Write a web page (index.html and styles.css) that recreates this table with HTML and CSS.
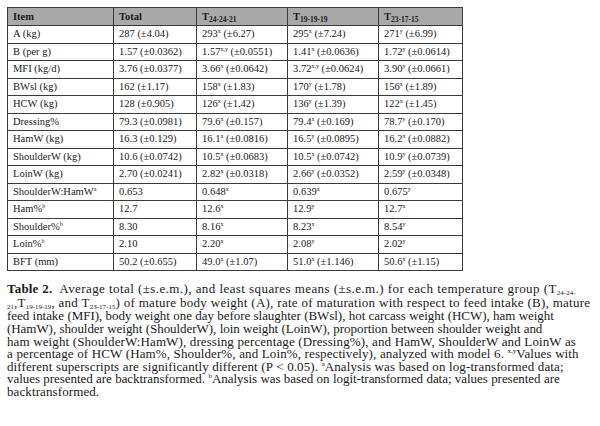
FILE: index.html
```html
<!DOCTYPE html>
<html>
<head>
<meta charset="utf-8">
<link rel="stylesheet" href="styles.css">
</head>
<body>
<div class="page">
<table class="data">
<colgroup>
<col class="c1"><col class="c2"><col class="c3"><col class="c4"><col class="c5">
</colgroup>
<thead>
<tr><th>Item</th><th>Total</th><th>T<sub>24-24-21</sub></th><th>T<sub>19-19-19</sub></th><th>T<sub>23-17-15</sub></th></tr>
</thead>
<tbody>
<tr><td>A (kg)</td><td>287 (±4.04)</td><td>293<sup>x</sup> (±6.27)</td><td>295<sup>x</sup> (±7.24)</td><td>271<sup>y</sup> (±6.99)</td></tr>
<tr><td>B (per g)</td><td>1.57 (±0.0362)</td><td>1.57<sup>x,y</sup> (±0.0551)</td><td>1.41<sup>x</sup> (±0.0636)</td><td>1.72<sup>y</sup> (±0.0614)</td></tr>
<tr><td>MFI (kg/d)</td><td>3.76 (±0.0377)</td><td>3.66<sup>x</sup> (±0.0642)</td><td>3.72<sup>x,y</sup> (±0.0624)</td><td>3.90<sup>y</sup> (±0.0661)</td></tr>
<tr><td>BWsl (kg)</td><td>162 (±1.17)</td><td>158<sup>x</sup> (±1.83)</td><td>170<sup>y</sup> (±1.78)</td><td>156<sup>x</sup> (±1.89)</td></tr>
<tr><td>HCW (kg)</td><td>128 (±0.905)</td><td>126<sup>x</sup> (±1.42)</td><td>136<sup>y</sup> (±1.39)</td><td>122<sup>x</sup> (±1.45)</td></tr>
<tr><td>Dressing%</td><td>79.3 (±0.0981)</td><td>79.6<sup>x</sup> (±0.157)</td><td>79.4<sup>x</sup> (±0.169)</td><td>78.7<sup>y</sup> (±0.170)</td></tr>
<tr><td>HamW (kg)</td><td>16.3 (±0.129)</td><td>16.1<sup>x</sup> (±0.0816)</td><td>16.5<sup>y</sup> (±0.0895)</td><td>16.2<sup>x</sup> (±0.0882)</td></tr>
<tr><td>ShoulderW (kg)</td><td>10.6 (±0.0742)</td><td>10.5<sup>x</sup> (±0.0683)</td><td>10.5<sup>x</sup> (±0.0742)</td><td>10.9<sup>y</sup> (±0.0739)</td></tr>
<tr><td>LoinW (kg)</td><td>2.70 (±0.0241)</td><td>2.82<sup>x</sup> (±0.0318)</td><td>2.66<sup>y</sup> (±0.0352)</td><td>2.59<sup>y</sup> (±0.0348)</td></tr>
<tr><td>ShoulderW:HamW<sup>a</sup></td><td>0.653</td><td>0.648<sup>x</sup></td><td>0.639<sup>x</sup></td><td>0.675<sup>y</sup></td></tr>
<tr><td>Ham%<sup>b</sup></td><td>12.7</td><td>12.6<sup>x</sup></td><td>12.9<sup>y</sup></td><td>12.7<sup>x</sup></td></tr>
<tr><td>Shoulder%<sup>b</sup></td><td>8.30</td><td>8.16<sup>x</sup></td><td>8.23<sup>x</sup></td><td>8.54<sup>y</sup></td></tr>
<tr><td>Loin%<sup>b</sup></td><td>2.10</td><td>2.20<sup>x</sup></td><td>2.08<sup>y</sup></td><td>2.02<sup>y</sup></td></tr>
<tr><td>BFT (mm)</td><td>50.2 (±0.655)</td><td>49.0<sup>x</sup> (±1.07)</td><td>51.0<sup>x</sup> (±1.146)</td><td>50.6<sup>x</sup> (±1.15)</td></tr>
</tbody>
</table>
<p class="caption"><span class="line first"><b>Table 2.</b>&nbsp; Average total (±s.e.m.), and least squares means (±s.e.m.) for each temperature group (T<sub>24-24-</sub></span><span class="line second"><sub>21</sub>,T<sub>19-19-19</sub>, and T<sub>23-17-15</sub>) of mature body weight (A), rate of maturation with respect to feed intake (B), mature</span><span class="line tight">feed intake (MFI), body weight one day before slaughter (BWsl), hot carcass weight (HCW), ham weight</span><span class="line tight">(HamW), shoulder weight (ShoulderW), loin weight (LoinW), proportion between shoulder weight and</span><span class="line">ham weight (ShoulderW:HamW), dressing percentage (Dressing%), and HamW, ShoulderW and LoinW as</span><span class="line">a percentage of HCW (Ham%, Shoulder%, and Loin%, respectively), analyzed with model 6. <sup>x,y</sup>Values with</span><span class="line">different superscripts are significantly different (P &lt; 0.05). <sup>a</sup>Analysis was based on log-transformed data;</span><span class="line tight">values presented are backtransformed. <sup>b</sup>Analysis was based on logit-transformed data; values presented are</span><span class="line">backtransformed.</span></p>
</div>
</body>
</html>
```

FILE: styles.css
```css
html, body {
  margin: 0;
  padding: 0;
  background: #ffffff;
}
.page {
  padding: 7px 7px 0 7px;
  font-family: "Liberation Serif", "Times New Roman", serif;
  color: #1a1a1a;
}
.data {
  border-collapse: collapse;
  width: 455px;
  table-layout: fixed;
  font-size: 10.5px;
  border: 1.5px solid #3a3a3a;
}
.c1 { width: 106px; }
.c2 { width: 83px; }
.c3 { width: 91px; }
.c4 { width: 91px; }
.c5 { width: 84px; }
.data th, .data td {
  border: 1px solid #3a3a3a;
  text-align: left;
  padding: 0 0 0 5px;
  height: 16.5px;
  white-space: nowrap;
  line-height: 12px;
}
.data th {
  background: #a9a9a9;
  font-weight: bold;
  height: 17px;
}
.data sup {
  font-size: 6px;
  vertical-align: 4px;
  line-height: 0;
}
.data th sub {
  font-size: 7.5px;
  vertical-align: -1.5px;
  line-height: 0;
}
.caption {
  margin: 12px 0 0 0;
  font-size: 13px;
  letter-spacing: 0.1px;
  word-spacing: 0.2px;
  white-space: nowrap;
}
.line {
  display: block;
  height: 12.6px;
  line-height: 12.6px;
}
.line.first {
  height: 14px;
  letter-spacing: 0.4px;
}
.line.second {
  height: 13.4px;
  letter-spacing: 0.25px;
}
.line.tight {
  letter-spacing: -0.05px;
}
.caption b {
  font-weight: bold;
  letter-spacing: 0.2px;
}
.caption sub {
  font-size: 7px;
  letter-spacing: 0;
  vertical-align: -1.5px;
  line-height: 0;
}
.caption sup {
  font-size: 7px;
  letter-spacing: 0;
  vertical-align: 5px;
  line-height: 0;
}
```
